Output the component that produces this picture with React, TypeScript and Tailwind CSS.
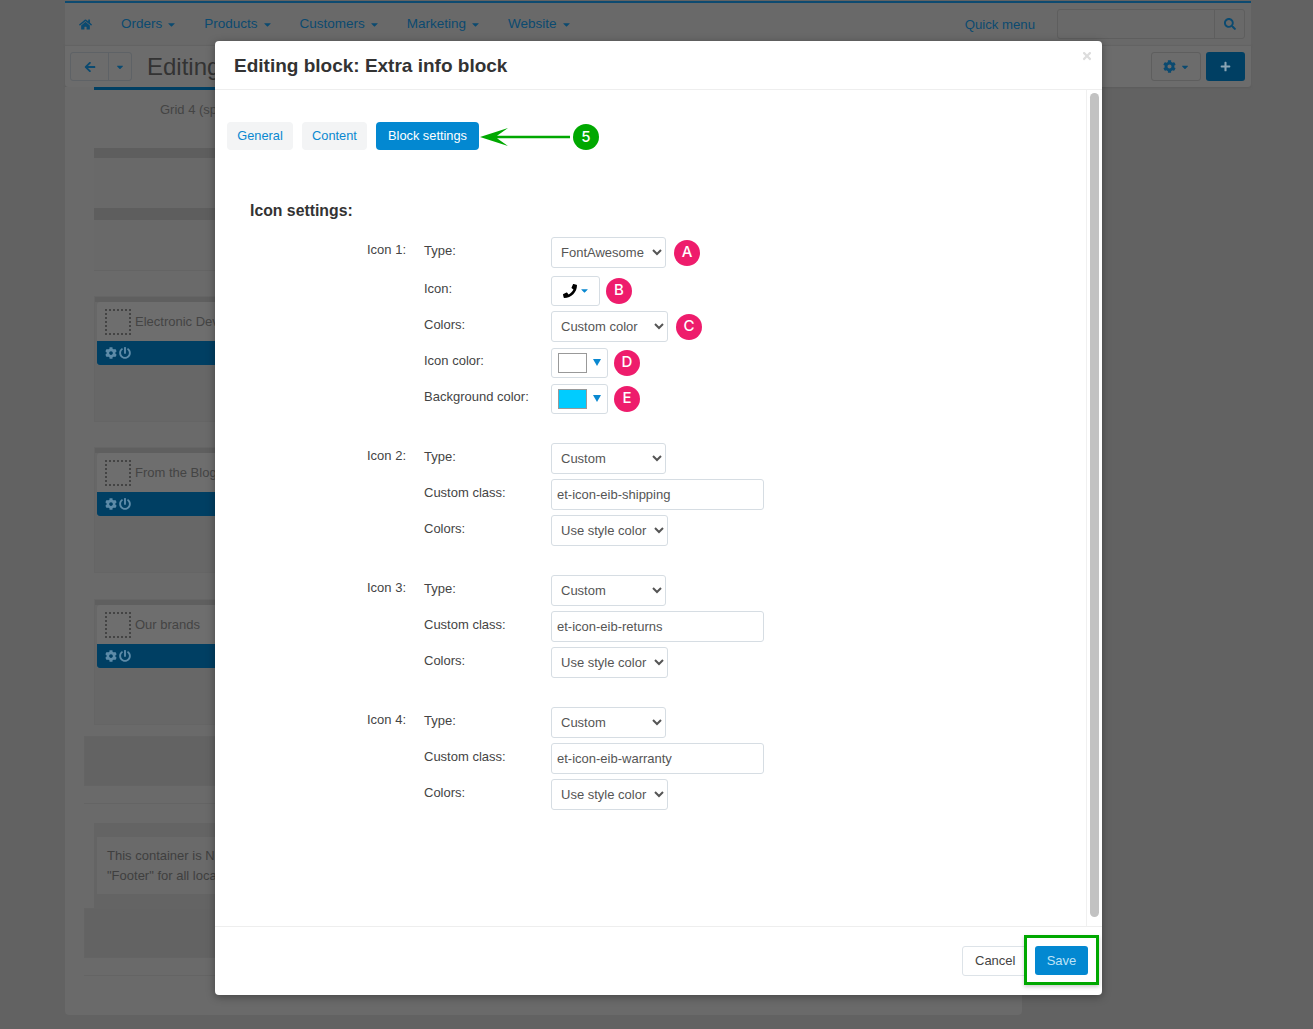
import type { ReactNode } from "react";
import { FaArrowLeft, FaCaretDown, FaCog, FaHome, FaPhone, FaPlus, FaPowerOff, FaSearch, FaTimes } from "react-icons/fa";

const NavItem = ({ label, className }: { label: string; className: string }) => (
  <div className={`flex items-center gap-[5px] text-[13.5px] text-[#0b4a70] ${className}`}>
    {label}
    <FaCaretDown className="h-[11px] w-[9px]" />
  </div>
);

const LayoutCard = ({ title, className = "" }: { title: string; className?: string }) => (
  <div className={`h-[126px] w-[200px] border border-[#656565] bg-[#676767] ${className}`}>
    <div className="h-[5px] bg-[#5f5f5f]" />
    <div className="ml-[2px] rounded-t-[3px] bg-[#6e6e6e]">
      <div className="flex h-[39px] items-center gap-[4px] pl-[8px]">
        <div className="h-[26px] w-[26px] shrink-0 border-2 border-dotted border-[#444]" />
        <span className="whitespace-nowrap text-[13px] text-[#444]">{title}</span>
      </div>
      <div className="flex h-[24px] items-center gap-[2px] rounded-bl-[3px] bg-[#003f63] pl-[8px] text-[#5d8ba8]">
        <FaCog className="h-[12px] w-[12px]" />
        <FaPowerOff className="h-[12px] w-[12px]" />
      </div>
    </div>
  </div>
);

const Badge = ({ letter, className = "bg-[#ee1c6c]" }: { letter: string; className?: string }) => (
  <div className={`flex h-[26px] w-[26px] shrink-0 items-center justify-center rounded-full font-['Inter',sans-serif] text-[15px] font-medium text-white ${className}`}>
    {letter}
  </div>
);

const Row = ({ label, children, className = "" }: { label: string; children: ReactNode; className?: string }) => (
  <div className={`flex h-[31px] items-center ${className}`}>
    <div className="-mt-[3px] w-[127px] shrink-0 text-[13px] text-[#444]">{label}</div>
    {children}
  </div>
);

const Select = ({ value, className }: { value: string; className: string }) => (
  <select
    defaultValue={value}
    className={`h-[31px] rounded-[3px] border border-[#d6dde3] bg-white pl-[5px] text-[13px] text-[#555] ${className}`}
  >
    <option>{value}</option>
  </select>
);

const TextInput = ({ value }: { value: string }) => (
  <input
    readOnly
    value={value}
    className="h-[31px] w-[213px] rounded-[3px] border border-[#d6dde3] bg-white px-[5px] text-[13px] text-[#555]"
  />
);

const Swatch = ({ color }: { color: string }) => (
  <div className="flex h-[30px] w-[57px] items-center gap-[6px] rounded-[3px] border border-[#d6dde3] bg-white pl-[6px]">
    <div className={`h-[20px] w-[29px] border border-[#999] ${color}`} />
    <svg width="8" height="7" viewBox="0 0 8 7">
      <polygon points="0,0 8,0 4,7" fill="#0a88d0" />
    </svg>
  </div>
);

const IconGroup = ({ title, children, className = "" }: { title: string; children: ReactNode; className?: string }) => (
  <div className={`flex pl-[152px] ${className}`}>
    <div className="-mt-[3px] flex h-[31px] w-[57px] shrink-0 items-center text-[13px] text-[#444]">{title}</div>
    <div className="flex flex-col gap-[5px]">{children}</div>
  </div>
);

const CustomGroup = ({ title, value, className }: { title: string; value: string; className: string }) => (
  <IconGroup title={title} className={className}>
    <Row label="Type:">
      <Select value="Custom" className="w-[115px]" />
    </Row>
    <Row label="Custom class:">
      <TextInput value={value} />
    </Row>
    <Row label="Colors:">
      <Select value="Use style color" className="w-[117px]" />
    </Row>
  </IconGroup>
);

const App = () => {
  return (
    <div className="relative h-[1029px] w-[1313px] overflow-hidden bg-[#626262] font-['Liberation_Sans',Arial,sans-serif]">
      {/* page behind the dialog */}
      <div className="ml-[65px] w-[1186px] pt-px">
        <div className="flex h-[44px] items-center border-t-2 border-[#0d4a70] bg-[#696969] pl-[14px] pr-[6px]">
          <FaHome className="h-[13px] w-[13px] text-[#0b4a70]" />
          <NavItem label="Orders" className="ml-[29px] mt-px" />
          <NavItem label="Products" className="ml-[28px] mt-px" />
          <NavItem label="Customers" className="ml-[28px] mt-px" />
          <NavItem label="Marketing" className="ml-[28px] mt-px" />
          <NavItem label="Website" className="ml-[28px] mt-px" />
          <div className="ml-auto mt-px text-[13.2px] text-[#0b4a70]">Quick menu</div>
          <div className="ml-[22px] flex h-[30px] w-[188px] rounded-[3px] border border-[#5e5e5e]">
            <div className="flex-1" />
            <div className="flex w-[30px] items-center justify-center border-l border-[#5e5e5e]">
              <FaSearch className="h-[12px] w-[12px] text-[#0b4a70]" />
            </div>
          </div>
        </div>
        <div className="flex h-[42px] items-center rounded-b-[3px] border-t border-[#636363] bg-[#6c6c6c] pl-[5px] pr-[6px] shadow-[0_1px_2px_#5c5c5c]">
          <div className="flex h-[29px] w-[62px] rounded-[3px] border border-[#5e6266] text-[#0b4a70]">
            <div className="flex w-[38px] items-center justify-center border-r border-[#5e6266]">
              <FaArrowLeft className="h-[12px] w-[12px]" />
            </div>
            <div className="flex flex-1 items-center justify-center">
              <FaCaretDown className="h-[10px] w-[8px]" />
            </div>
          </div>
          <div className="ml-[15px] text-[24px] text-[#333]">Editing</div>
          <div className="ml-auto flex h-[29px] w-[50px] items-center justify-center gap-[5px] rounded-[3px] border border-[#5e5e5e] text-[#0b4a70]">
            <FaCog className="h-[13px] w-[13px]" />
            <FaCaretDown className="h-[10px] w-[8px]" />
          </div>
          <div className="ml-[5px] flex h-[29px] w-[39px] items-center justify-center rounded-[3px] bg-[#003f63] text-[#8aa5b5]">
            <FaPlus className="h-[11px] w-[11px]" />
          </div>
        </div>
      </div>

      <div className="ml-[65px] h-[928px] w-[957px] rounded-b-[4px] bg-[#6a6a6a] pl-[19px]">
        <div className="ml-[10px] w-[200px]">
          <div className="h-[3px] bg-[#003f63]" />
          <div className="flex h-[58px] bg-[#6a6a6a] pl-[66px] pt-[10px] text-[13px] text-[#444]">
            <span className="whitespace-nowrap">Grid 4 (span 4)</span>
          </div>
          <div className="h-[10px] bg-[#5e5e5e]" />
          <div className="h-[50px] bg-[#696969]" />
          <div className="h-[12px] bg-[#5e5e5e]" />
          <div className="h-[51px] border-b border-[#646464] bg-[#696969]" />
          <div className="mt-[25px] flex flex-col gap-[25px]">
            <LayoutCard title="Electronic Devices" />
            <LayoutCard title="From the Blog" />
            <LayoutCard title="Our brands" className="mt-px" />
          </div>
        </div>
        <div className="mt-[11px] h-[50px] w-[200px] border border-[#646464] bg-[#636363]" />
        <div className="mt-[17px] h-px w-[200px] bg-[#646464]" />
        <div className="ml-[10px] mt-[19px] h-[85px] w-[200px] bg-[#646464] py-[14px] pl-[3px]">
          <div className="h-full whitespace-nowrap bg-[#6a6a6a] pl-[10px] pt-[9px] text-[13px] leading-[19.5px] text-[#3f3f3f]">
            <div>This container is Not</div>
            <div>"Footer" for all locations</div>
          </div>
        </div>
        <div className="h-[50px] w-[200px] border border-[#646464] bg-[#636363]" />
        <div className="mt-[17px] h-px w-[200px] bg-[#646464]" />
      </div>

      {/* dialog */}
      <div className="absolute left-[215px] top-[41px] flex h-[954px] w-[887px] flex-col rounded-[4px] bg-white shadow-[0_2px_8px_rgba(0,0,0,0.35)]">
        <div className="flex h-[49px] shrink-0 items-center border-b border-[#eeeeee] pl-[19px]">
          <h1 className="mt-[2px] text-[19px] font-bold text-[#333]">Editing block: Extra info block</h1>
          <FaTimes className="absolute right-[10px] top-[9px] h-[12px] w-[10px] text-[#dddddd]" />
        </div>

        <div className="flex h-[836px] shrink-0">
          <div className="flex-1 pt-[32px]">
            <div className="flex items-center pl-[12px] text-[12.8px]">
              <div className="flex h-[28px] w-[66px] items-center justify-center rounded-[4px] bg-[#f3f4f5] text-[#0a88d0]">General</div>
              <div className="ml-[9px] flex h-[28px] w-[65px] items-center justify-center rounded-[4px] bg-[#f3f4f5] text-[#0a88d0]">Content</div>
              <div className="ml-[9px] flex h-[28px] w-[103px] items-center justify-center rounded-[4px] bg-[#0388d1] text-white">Block settings</div>
              <svg width="91" height="20" viewBox="0 0 91 20" className="mt-[2px]">
                <path d="M1 10 L29 1 L18 8.7 L91 8.7 L91 11.3 L18 11.3 L29 19 Z" fill="#00a800" />
              </svg>
              <Badge letter="5" className="ml-[3px] mt-[2px] bg-[#00a800]" />
            </div>

            <h2 className="ml-[35px] mt-[50px] text-[15.8px] font-bold leading-[22px] text-[#333]">Icon settings:</h2>

            <IconGroup title="Icon 1:" className="mt-[15px]">
              <Row label="Type:" className="mb-[2px]">
                <Select value="FontAwesome" className="w-[115px]" />
                <Badge letter="A" className="ml-[8px] bg-[#ee1c6c]" />
              </Row>
              <Row label="Icon:">
                <div className="flex h-[30px] w-[49px] items-center justify-center gap-[3px] rounded-[3px] border border-[#d6dde3]">
                  <FaPhone className="h-[14px] w-[14px] text-black" />
                  <FaCaretDown className="h-[11px] w-[9px] text-[#0a88d0]" />
                </div>
                <Badge letter="B" className="ml-[6px] bg-[#ee1c6c]" />
              </Row>
              <Row label="Colors:">
                <Select value="Custom color" className="w-[117px]" />
                <Badge letter="C" className="ml-[8px] bg-[#ee1c6c]" />
              </Row>
              <Row label="Icon color:">
                <Swatch color="bg-white" />
                <Badge letter="D" className="ml-[6px] bg-[#ee1c6c]" />
              </Row>
              <Row label="Background color:">
                <Swatch color="bg-[#00ccff]" />
                <Badge letter="E" className="ml-[6px] bg-[#ee1c6c]" />
              </Row>
            </IconGroup>
            <CustomGroup title="Icon 2:" value="et-icon-eib-shipping" className="mt-[29px]" />
            <CustomGroup title="Icon 3:" value="et-icon-eib-returns" className="mt-[29px]" />
            <CustomGroup title="Icon 4:" value="et-icon-eib-warranty" className="mt-[29px]" />
          </div>
          {/* scrollbar */}
          <div className="w-[16px] shrink-0 border-l border-[#f0f0f0] pl-[3px] pt-[3px]">
            <div className="h-[824px] w-[9px] rounded-full bg-[#c2c2c2]" />
          </div>
        </div>

        <div className="flex flex-1 items-start justify-end border-t border-[#eeeeee] pr-[3px] pt-[8px]">
          <div className="mt-[11px] flex h-[30px] w-[70px] items-center rounded-[3px] border border-[#dde3e8] pl-[12px] text-[13px] text-[#444]">
            Cancel
          </div>
          <div className="relative -ml-[8px] flex h-[50px] w-[75px] items-center justify-center border-[3px] border-[#00a800] bg-white shadow-[0_2px_4px_rgba(0,0,0,0.2)]">
            <div className="mt-px flex h-[29px] w-[53px] items-center justify-center rounded-[3px] bg-[#0388d1] text-[13px] text-[#bfe3f7]">
              Save
            </div>
          </div>
        </div>
      </div>
    </div>
  );
};

export default App;
